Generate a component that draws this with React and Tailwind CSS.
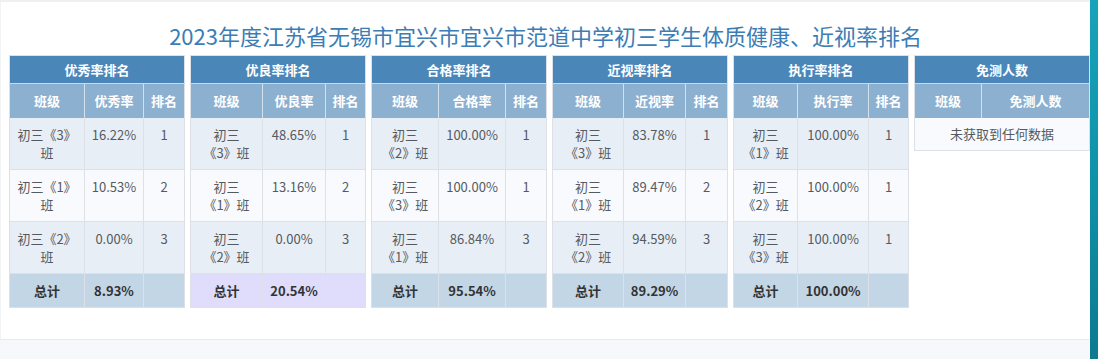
import React from "react";

const panels = [
  {
    title: "优秀率排名",
    col: "优秀率",
    widths: [75, 59, 41],
    rows: [
      [["初三《3》", "班"], "16.22%", "1"],
      [["初三《1》", "班"], "10.53%", "2"],
      [["初三《2》", "班"], "0.00%", "3"],
    ],
    total: "8.93%",
    totalBg: "bg-[#c3d6e5]",
  },
  {
    title: "优良率排名",
    col: "优良率",
    widths: [72, 63, 40],
    rows: [
      [["初三", "《3》班"], "48.65%", "1"],
      [["初三", "《1》班"], "13.16%", "2"],
      [["初三", "《2》班"], "0.00%", "3"],
    ],
    total: "20.54%",
    totalBg: "bg-[#e0dcfb]",
  },
  {
    title: "合格率排名",
    col: "合格率",
    widths: [67, 67, 41],
    rows: [
      [["初三", "《2》班"], "100.00%", "1"],
      [["初三", "《3》班"], "100.00%", "1"],
      [["初三", "《1》班"], "86.84%", "3"],
    ],
    total: "95.54%",
    totalBg: "bg-[#c3d6e5]",
  },
  {
    title: "近视率排名",
    col: "近视率",
    widths: [71, 62, 42],
    rows: [
      [["初三", "《3》班"], "83.78%", "1"],
      [["初三", "《1》班"], "89.47%", "2"],
      [["初三", "《2》班"], "94.59%", "3"],
    ],
    total: "89.29%",
    totalBg: "bg-[#c3d6e5]",
  },
  {
    title: "执行率排名",
    col: "执行率",
    widths: [64, 71, 40],
    rows: [
      [["初三", "《1》班"], "100.00%", "1"],
      [["初三", "《2》班"], "100.00%", "1"],
      [["初三", "《3》班"], "100.00%", "1"],
    ],
    total: "100.00%",
    totalBg: "bg-[#c3d6e5]",
  },
];

function RankTable({ p }) {
  return (
    <table className="w-[175px] table-fixed border-collapse border border-[#dde1e7] text-[13px]">
      <colgroup>
        {p.widths.map((w, i) => (
          <col key={i} style={{ width: w }} />
        ))}
      </colgroup>
      <thead>
        <tr className="h-[28px] bg-[#4b86b9] text-white">
          <th colSpan={3} className="font-bold border-b border-[#c9d9e8]">
            {p.title}
          </th>
        </tr>
        <tr className="h-[34px] bg-[#8cb0d0] text-white">
          <th className="font-bold border-r border-[#d4e0ec]">班级</th>
          <th className="font-bold border-r border-[#d4e0ec]">{p.col}</th>
          <th className="font-bold">排名</th>
        </tr>
      </thead>
      <tbody className="text-[#555a60]">
        {p.rows.map((r, i) => (
          <tr
            key={i}
            className={`h-[52px] border-b border-[#dde1e7] ${
              i % 2 === 0 ? "bg-[#e8eef6]" : "bg-[#f8fafe]"
            }`}
          >
            <td className="align-top pt-[8px] text-center leading-[18px] border-r border-[#dde1e7]">
              {r[0][0]}
              <br />
              {r[0][1]}
            </td>
            <td className="align-top pt-[8px] text-center leading-[18px] border-r border-[#dde1e7]">
              {r[1]}
            </td>
            <td className="align-top pt-[8px] text-center leading-[18px]">{r[2]}</td>
          </tr>
        ))}
        <tr className={`h-[34px] ${p.totalBg} text-[#333] font-bold`}>
          <td className="text-center border-r border-[#dde1e7]">总计</td>
          <td className="text-center border-r border-[#dde1e7]">{p.total}</td>
          <td></td>
        </tr>
      </tbody>
    </table>
  );
}

function ExemptTable() {
  return (
    <table className="w-[175px] table-fixed border-collapse border border-[#dde1e7] text-[13px]">
      <colgroup>
        <col style={{ width: 67 }} />
        <col style={{ width: 108 }} />
      </colgroup>
      <thead>
        <tr className="h-[28px] bg-[#4b86b9] text-white">
          <th colSpan={2} className="font-bold border-b border-[#c9d9e8]">
            免测人数
          </th>
        </tr>
        <tr className="h-[34px] bg-[#8cb0d0] text-white">
          <th className="font-bold border-r border-[#d4e0ec]">班级</th>
          <th className="font-bold">免测人数</th>
        </tr>
      </thead>
      <tbody>
        <tr className="h-[33px] bg-[#f9fafe] text-[#555a60]">
          <td colSpan={2} className="text-center">
            未获取到任何数据
          </td>
        </tr>
      </tbody>
    </table>
  );
}

export default function App() {
  return (
    <div
      className="flex w-[1098px] h-[359px] overflow-hidden bg-white"
      style={{ fontFamily: '"Noto Sans CJK SC", "Noto Sans", sans-serif' }}
    >
      <div className="flex-1 flex flex-col">
        <div className="h-[2px] bg-[#eef0f3]" />
        <div className="bg-white pt-[18px] pb-[31px] border-l border-[#f2f3f5]">
          <h1 className="h-[30px] leading-[30px] text-center text-[22px] font-normal text-[#3b7db4]">
            2023年度江苏省无锡市宜兴市宜兴市范道中学初三学生体质健康、近视率排名
          </h1>
          <div className="mt-[5px] pl-[8px] flex items-start gap-[5px]">
            {panels.map((p, i) => (
              <RankTable key={i} p={p} />
            ))}
            <ExemptTable />
          </div>
        </div>
        <div className="flex-1 border-t border-[#e8eaee] bg-[#f7f8fc]" />
      </div>
      <div className="w-[8px] bg-linear-to-b from-[#17a3ba] via-[#0f92a9] to-[#0c7a90]" />
    </div>
  );
}
